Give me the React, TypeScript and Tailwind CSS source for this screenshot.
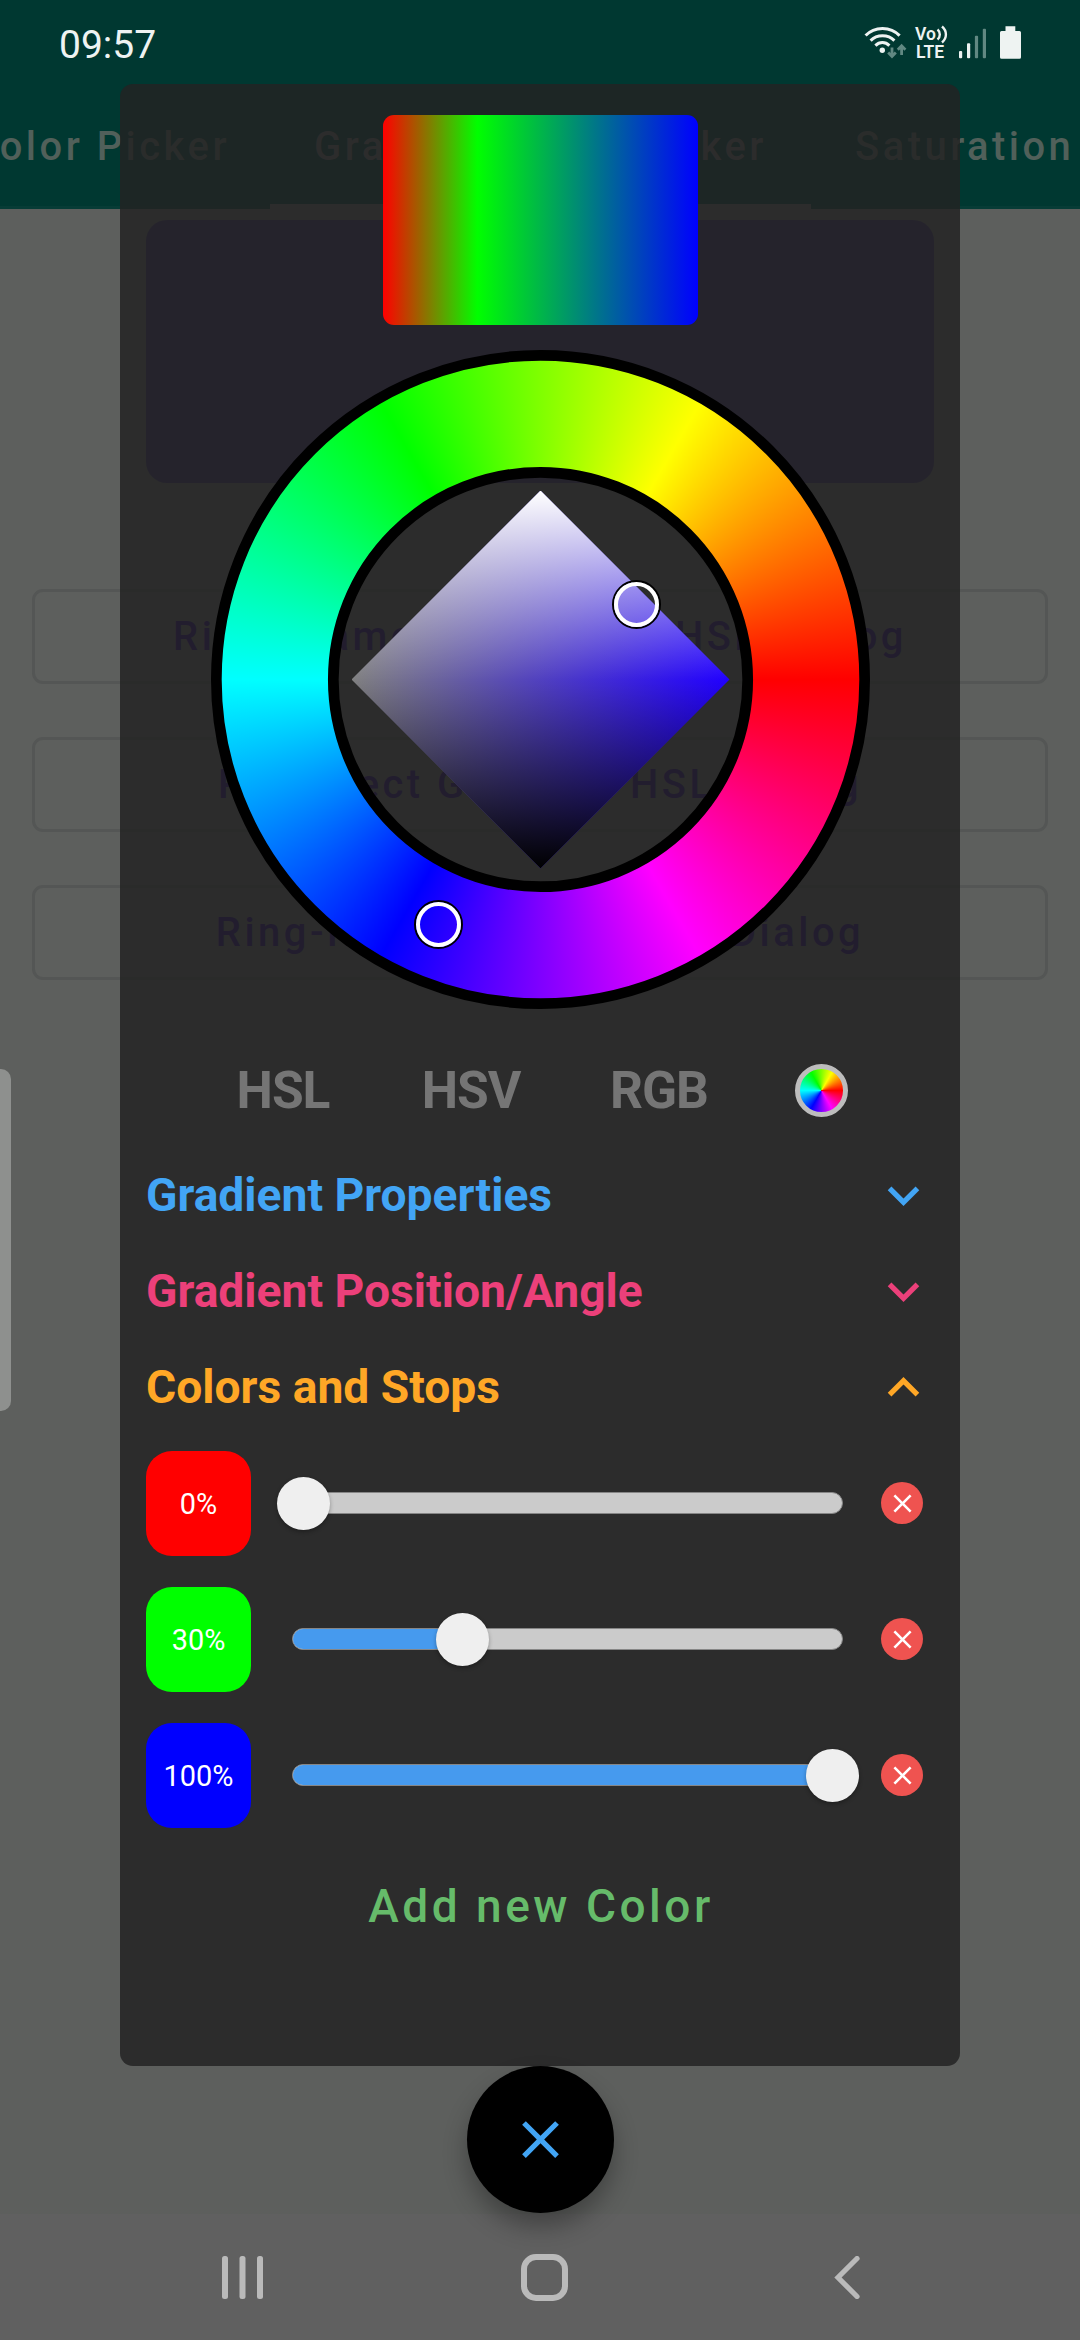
import React from "react";

const stops = [
  { label: "0%", value: 0, swatch: "bg-[#ff0000]" },
  { label: "30%", value: 30, swatch: "bg-[#00ff00]" },
  { label: "100%", value: 100, swatch: "bg-[#0000ff]" },
];

const sections = [
  { title: "Gradient Properties", color: "text-[#42a5f5]", open: false },
  { title: "Gradient Position/Angle", color: "text-[#ec407a]", open: false },
  { title: "Colors and Stops", color: "text-[#ffa726]", open: true },
];

const pageButtons = [
  "Ring-Diamond Gradient HSL Dialog",
  "Ring-Rect Gradient HSL Dialog",
  "Ring-Rect Gradient HSV Dialog",
];

function CloseIcon({ className }: { className: string }) {
  return (
    <svg viewBox="0 0 24 24" fill="currentColor" className={className}>
      <path d="M19 6.41L17.59 5 12 10.59 6.41 5 5 6.41 10.59 12 5 17.59 6.41 19 12 13.41 17.59 19 19 17.59 13.41 12z" />
    </svg>
  );
}

function Chevron({ open }: { open: boolean }) {
  return (
    <svg viewBox="0 0 24 24" fill="currentColor" className="-mt-px -mr-px size-[63px]">
      <path
        d={
          open
            ? "M12 8l-6 6 1.41 1.41L12 10.83l4.59 4.58L18 14z"
            : "M16.59 8.59L12 13.17 7.41 8.59 6 10l6 6 6-6z"
        }
      />
    </svg>
  );
}

function StatusBar() {
  return (
    <div className="flex h-[84px] items-center justify-between pr-[58px] pl-[59px] text-[#eef3f2]">
      <span className="mt-[7px] text-[39px] leading-none">09:57</span>
      <div className="mt-[2px] flex h-[36px] items-start">
        <svg viewBox="864 25 43 36" className="h-[36px] w-[43px]" fill="none">
          <g stroke="#eef3f2" strokeWidth="3">
            <path d="M865.6 35.6C874.5 26 890.5 26 899.6 35.6" />
            <path d="M870.6 40.6C877 34 888 34 894.4 40.6" />
            <path d="M875.4 45.6C879.4 41.6 885.4 41.6 889.4 45.6" />
          </g>
          <circle cx="882.3" cy="50.3" r="2.7" fill="#eef3f2" />
          <g stroke="#618882" strokeWidth="2.8">
            <path d="M892 47.500V56M888.2 52.500L892 56.400 895.800 52.500" />
            <path d="M901.600 55V46M897.800 49.700L901.600 45.800 905.400 49.700" />
          </g>
        </svg>
        <div className="ml-[8px] flex w-[34px] flex-col text-[17.5px] leading-[18px] font-semibold">
          <span className="flex items-center">
            Vo
            <svg viewBox="0 0 12 20" className="-my-px h-[20px] w-[12px]" fill="none" stroke="currentColor" strokeWidth="2.4">
              <path d="M1.500 5.500C4.600 8 4.600 13 1.500 15.500" />
              <path d="M6 2.500C11.200 7 11.200 14 6 18.500" />
            </svg>
          </span>
          <span className="pl-px">LTE</span>
        </div>
        <svg viewBox="958 25 64 36" className="ml-[9px] h-[36px] w-[64px]" fill="#eef3f2">
          <rect x="959" y="51" width="3.2" height="7.3" rx="1" />
          <rect x="967" y="43.3" width="3.2" height="15" rx="1" />
          <rect x="974.9" y="35.7" width="3.2" height="22.6" rx="1" fill="#618882" />
          <rect x="982.8" y="28.7" width="3.2" height="29.6" rx="1" fill="#618882" />
          <path d="M1005.5 26.3h9.8v4.7h4.2a1.5 1.5 0 0 1 1.5 1.5v24.7a1.5 1.5 0 0 1-1.5 1.5h-18a1.5 1.5 0 0 1-1.5-1.5V32.5a1.5 1.5 0 0 1 1.5-1.5h4z" />
        </svg>
      </div>
    </div>
  );
}

function Page() {
  return (
    <div className="flex h-full flex-col bg-[#5d5f5d]">
      <header className="flex h-[209px] shrink-0 flex-col bg-[#003831]">
        <StatusBar />
        <div className="flex grow border-b-[3px] border-[#073c36] text-[39.9px] font-medium tracking-[3.5px] whitespace-nowrap text-[#51605a]">
          <div className="flex w-[270px] shrink-0 items-center justify-end overflow-hidden pt-[3px] pr-[40px]">
            Color Picker
          </div>
          <div className="-mb-[3px] flex w-[541px] shrink-0 items-center justify-center border-b-[5px] border-[#5d5f5f] pt-[5px] text-[#5d5f5f]">
            Gradient Color Picker
          </div>
          <div className="flex grow items-center pt-[3px] pl-[44px]">Saturation</div>
        </div>
      </header>
      <main className="flex grow flex-col pt-[11px]">
        <div className="mx-[146px] h-[263px] rounded-[21px] bg-[#352a60]" />
        <div className="mx-[32px] mt-[106px] flex flex-col gap-[53px]">
          {pageButtons.map((text) => (
            <div
              key={text}
              className="flex h-[95px] items-center justify-center rounded-[11px] border-[3px] border-[#545655] text-[39.9px] font-medium tracking-[3.5px] whitespace-nowrap text-[#20006c]"
            >
              {text}
            </div>
          ))}
        </div>
      </main>
      <nav className="h-[126px] shrink-0 bg-[#606060]" />
    </div>
  );
}

function Marker({ className }: { className: string }) {
  return (
    <div className={`absolute size-[49px] rounded-full border-2 border-black ${className}`}>
      <div className="size-full rounded-full border-[4px] border-white" />
    </div>
  );
}

function ColorWheel() {
  return (
    <div className="relative size-[659px]">
      <div className="absolute inset-[6px] rounded-full bg-[conic-gradient(from_90deg,#f00,#f0f,#00f,#0ff,#0f0,#ff0,#f00)] [mask:radial-gradient(circle,transparent_206px,#000_207px)]" />
      <svg viewBox="0 0 659 659" className="absolute inset-0" fill="none" stroke="#000" strokeWidth="10.7">
        <circle cx="329.5" cy="329.5" r="324.15" />
        <circle cx="329.5" cy="329.5" r="207.2" />
      </svg>
      <div className="absolute inset-[140.5px] [clip-path:polygon(50%_0,100%_50%,50%_100%,0_50%)] bg-[linear-gradient(to_bottom,#fff,rgba(255,255,255,0)_50%,rgba(0,0,0,0)_50%,#000),linear-gradient(to_right,#808080,#2100ff)]" />
      <Marker className="top-[230px] left-[401px]" />
      <Marker className="top-[550px] left-[203px]" />
    </div>
  );
}

function StopRow({ label, value, swatch }: { label: string; value: number; swatch: string }) {
  return (
    <div className="flex h-[105px] items-center">
      <div className={`flex size-[105px] items-center justify-center rounded-[26px] pt-[2px] text-[28.9px] text-white ${swatch}`}>
        {label}
      </div>
      <div className="relative -mt-px ml-[41px] h-[22px] w-[551px]">
        <div className="size-full overflow-hidden rounded-full border border-[#868686] bg-[#cbcbcb]">
          <div className="h-full bg-[#469aee]" style={{ width: value === 0 ? 0 : `${2 + value * 0.96}%` }} />
        </div>
        <div
          className="absolute top-[-15px] size-[53px] rounded-full bg-[#efefef] shadow-[0_2px_4px_rgba(0,0,0,0.3)]"
          style={{ left: -15 + value * 5.29 }}
        />
      </div>
      <div className="-mt-px ml-[38px] flex size-[42px] items-center justify-center rounded-full bg-[#ef5350] text-white">
        <CloseIcon className="size-[31px]" />
      </div>
    </div>
  );
}

function Dialog() {
  return (
    <div className="absolute top-[84px] left-[120px] flex h-[1982px] w-[840px] flex-col rounded-[13px] bg-[rgba(35,35,35,0.84)] px-[26px] pt-[31px]">
      <div className="ml-[237px] h-[210px] w-[315px] shrink-0 rounded-[11px] bg-[linear-gradient(to_right,#f00,#0f0_30%,#00f)]" />
      <div className="mt-[25px] ml-[65px] shrink-0">
        <ColorWheel />
      </div>
      <div className="mt-[24px] flex h-[115px] shrink-0 items-center text-[51.5px] font-bold tracking-[-1px] text-[#757575]">
        <span className="ml-[43px] w-[188px] text-center">HSL</span>
        <span className="w-[188px] text-center">HSV</span>
        <span className="w-[188px] text-center">RGB</span>
        <div className="ml-[42px] size-[53px] rounded-full border-[5px] border-[#bdbdbd] bg-[conic-gradient(from_90deg,#f00,#f0f,#00f,#0ff,#0f0,#ff0,#f00)] bg-origin-border" />
      </div>
      {sections.map((s) => (
        <div key={s.title} className={`flex h-[96px] shrink-0 items-center justify-between text-[46.2px] font-bold ${s.color}`}>
          <span>{s.title}</span>
          <Chevron open={s.open} />
        </div>
      ))}
      <div className="mt-[15px] flex flex-col gap-[31px]">
        {stops.map((s) => (
          <StopRow key={s.label} {...s} />
        ))}
      </div>
      <div className="mt-[44px] pl-[2px] text-center text-[46px] font-medium tracking-[3.5px] text-[#66bb6a]">Add new Color</div>
    </div>
  );
}

function NavIcons() {
  return (
    <div className="absolute bottom-0 left-0 flex h-[126px] w-full items-start pt-[40px]">
      <svg viewBox="0 0 42 43" className="mt-[2px] ml-[222px] h-[43px] w-[42px]" fill="#bababa">
        <rect width="6" height="43" rx="2.5" />
        <rect x="17.5" width="6" height="43" rx="2.5" />
        <rect x="35" width="6" height="43" rx="2.5" />
      </svg>
      <div className="ml-[257px] size-[47px] rounded-[15px] border-[6px] border-[#bababa]" />
      <svg viewBox="0 0 26 43" className="mt-[2px] ml-[266px] h-[43px] w-[26px]" fill="none" stroke="#bababa" strokeWidth="5.2" strokeLinecap="round">
        <path d="M23 2.5L4 21.5 23 40.5" />
      </svg>
    </div>
  );
}

export default function App() {
  return (
    <div className="relative h-[2340px] w-[1080px] overflow-hidden font-['Roboto',sans-serif]">
      <Page />
      <Dialog />
      <div className="absolute top-[1069px] left-0 h-[342px] w-[11px] rounded-r-[10px] bg-[#8e908e]" />
      <div className="absolute top-[2066px] left-[467px] flex size-[147px] items-center justify-center rounded-full bg-black text-[#42a5f5] shadow-[0_14px_24px_rgba(0,0,0,0.3)]">
        <CloseIcon className="size-[63px]" />
      </div>
      <NavIcons />
    </div>
  );
}
